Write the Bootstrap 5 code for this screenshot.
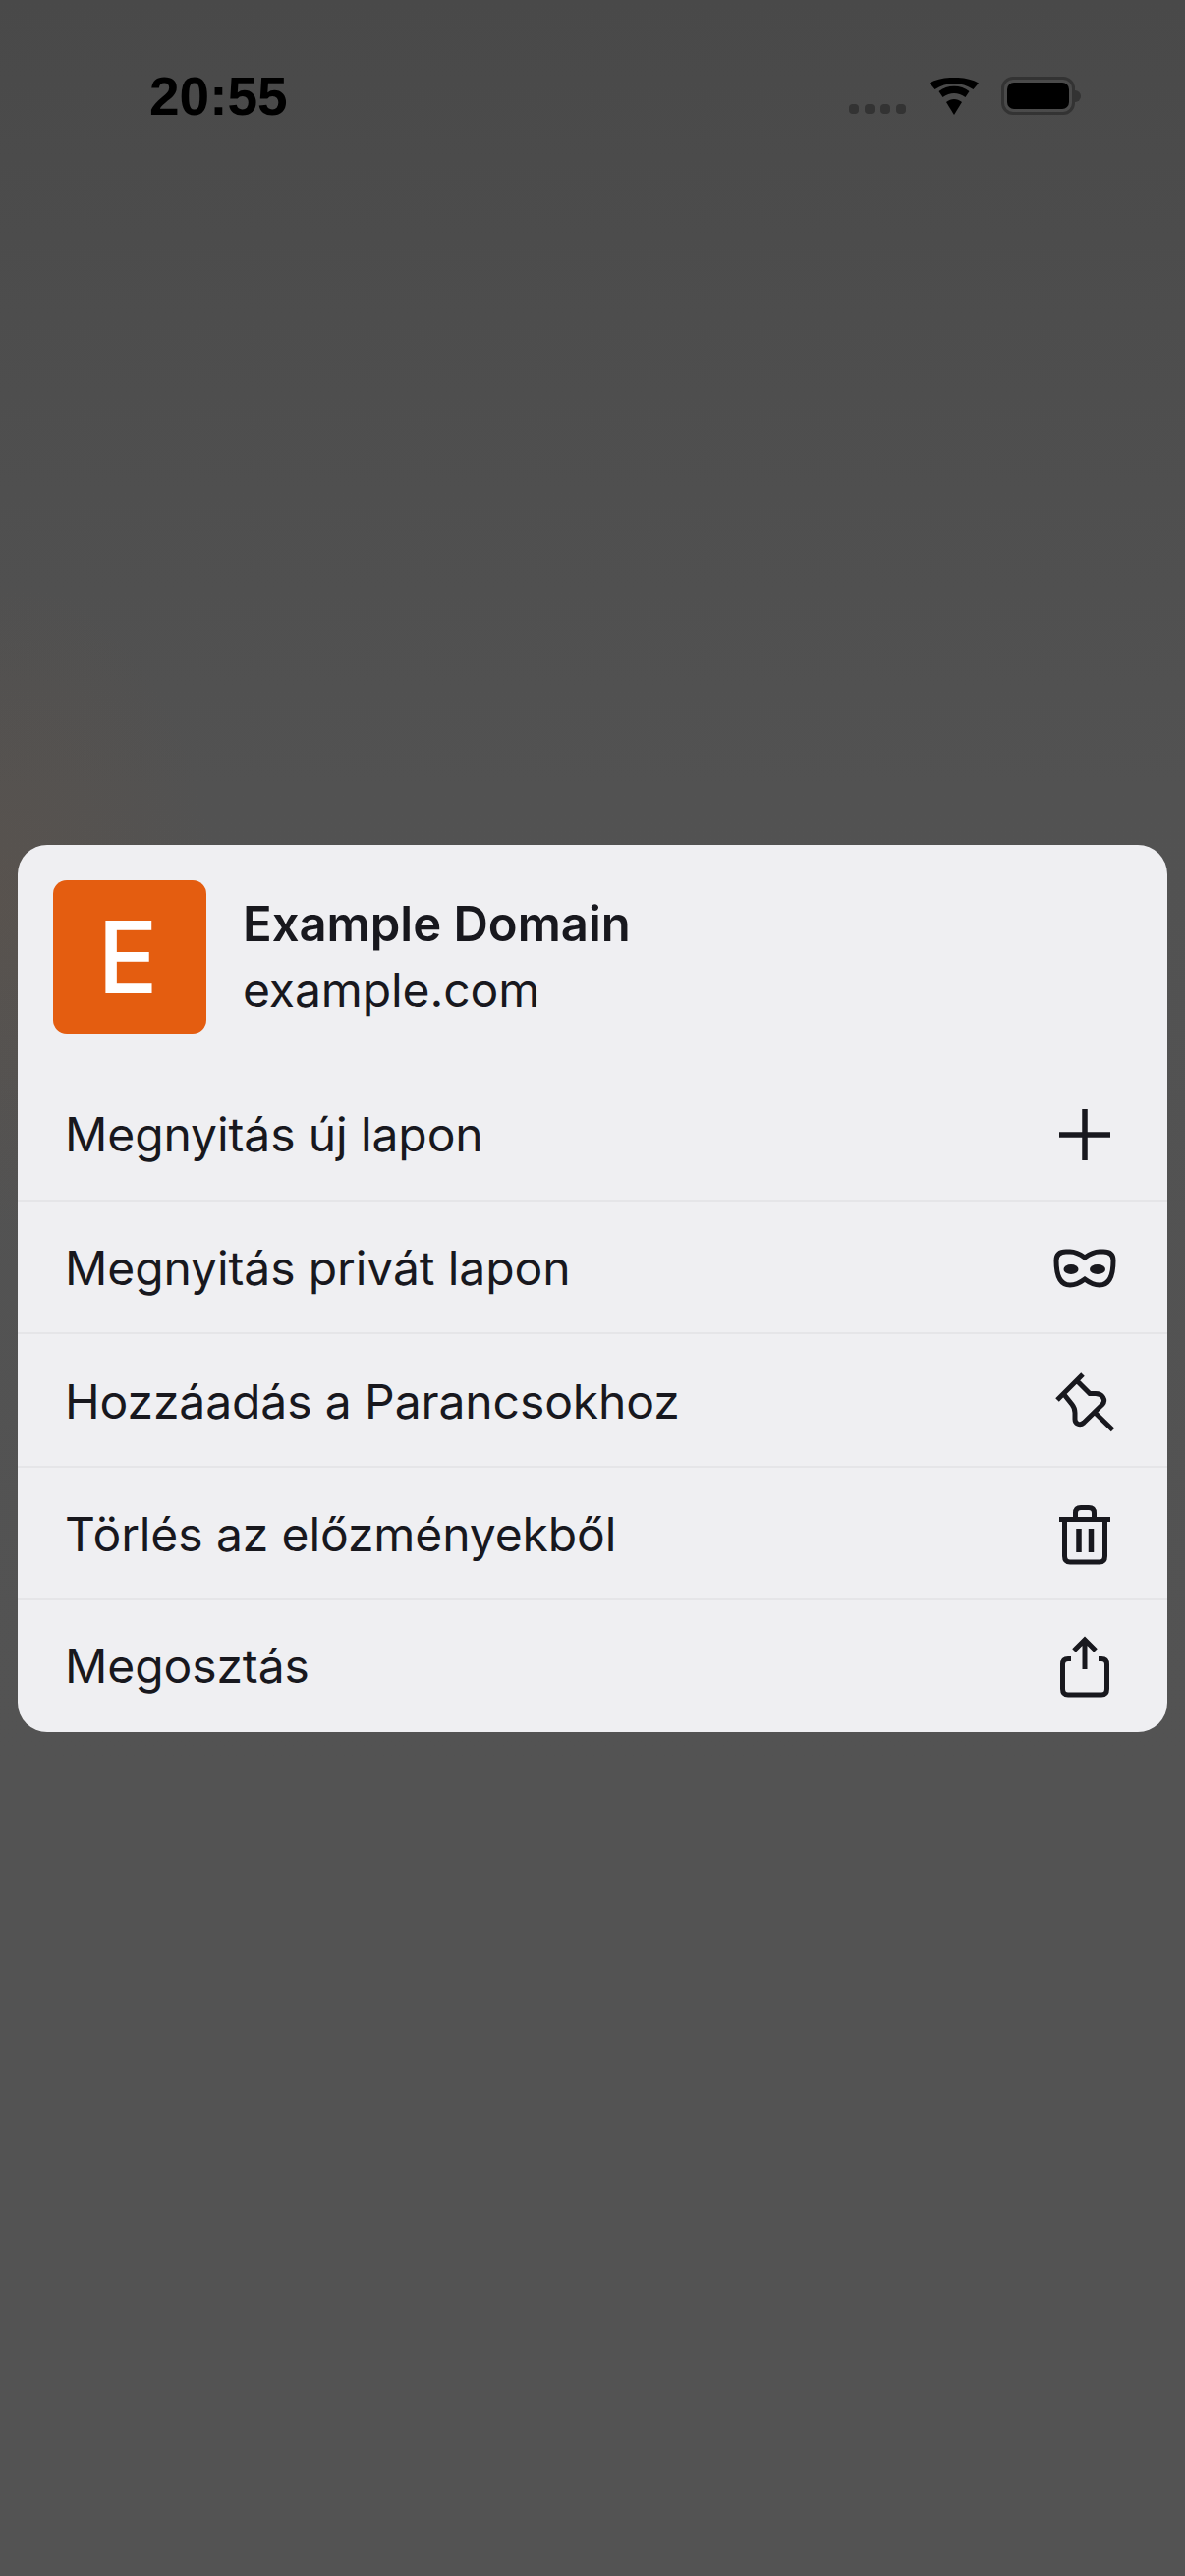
<!DOCTYPE html>
<html lang="hu">
<head>
  <meta charset="UTF-8">
  <title>Example Domain</title>
  <link href="https://cdn.jsdelivr.net/npm/bootstrap@5.3.3/dist/css/bootstrap.min.css" rel="stylesheet">
  <style>
    body {
      min-height: 2622px;
      font-family: Inter, "Noto Sans", sans-serif;
      color: #18181e;
      background:
        radial-gradient(ellipse 220px 330px at 0 920px, rgba(110, 85, 65, .22), rgba(110, 85, 65, 0)),
        linear-gradient(#494949 0, #4e4e4e 400px, #525252 800px, #535353 1800px, #535353 2622px);
    }
    .status-bar { height: 860px; padding: 75px 106px 0 152px; }
    .clock { font: 700 55px/46px "Liberation Sans", sans-serif; color: #000; }
    .signal-dot { width: 10px; height: 10px; border-radius: 4px; background: #333; }
    .signal-dots { margin-top: 31px; margin-right: 24px; gap: 6px; }
    .wifi-icon { margin-top: 4px; margin-right: 23px; }
    .battery-shell { width: 75px; height: 39px; margin-top: 3px; padding: 3px; border: 3px solid #333; border-radius: 12px; }
    .battery-fill { height: 100%; border-radius: 7px; background: #000; }
    .battery-nub { width: 6px; height: 12px; margin-top: 17px; border-radius: 0 6px 6px 0; background: #333; }
    .sheet { margin: 0 18px; border-radius: 30px; background: #efeff2; overflow: hidden; }
    .sheet-head { height: 225px; padding: 36px 0 0 36px; gap: 37px; }
    .site-logo { width: 156px; height: 156px; border-radius: 14px; background: #e45d10; color: #fff; font-size: 102px; font-weight: 500; line-height: 1; padding-right: 4px; }
    .site-title { font-size: 49px; line-height: 68px; font-weight: 600; margin-top: 11px; }
    .site-url { font-size: 48px; line-height: 66px; letter-spacing: -.1px; }
    .menu-row { height: 135.5px; padding: 4px 52px 0 48px; font-size: 48px; letter-spacing: -.1px; border-top: 2px solid #e5e5e8; }
    .menu-row:first-child { border-top: 0; }
    .menu-row:last-child { padding-top: 0; }
    .menu-icon { width: 64px; height: 64px; fill: none; stroke: #18181e; stroke-width: 5; }
  </style>
</head>
<body>
  <!-- status bar -->
  <div class="status-bar d-flex align-items-start">
    <div class="clock flex-grow-1">20:55</div>
    <div class="signal-dots d-flex">
      <div class="signal-dot"></div><div class="signal-dot"></div><div class="signal-dot"></div><div class="signal-dot"></div>
    </div>
    <svg class="wifi-icon" width="50" height="38" viewBox="0 0 50 38">
      <path d="M25 38 17 25C22 21 28 21 33 25Z"/>
      <path d="M13.5 20 9.5 14C18 7 32 7 40.5 14L36.5 20C29 14.5 21 14.5 13.5 20Z"/>
      <path d="M5.5 12 0 5.5C13 -2 37 -2 50 5.5L44.5 12C33 4 17 4 5.5 12Z"/>
    </svg>
    <div class="battery-shell"><div class="battery-fill"></div></div>
    <div class="battery-nub"></div>
  </div>

  <!-- link preview sheet -->
  <div class="sheet">
    <div class="sheet-head d-flex align-items-start">
      <div class="site-logo d-flex align-items-center justify-content-center">E</div>
      <div>
        <div class="site-title">Example Domain</div>
        <div class="site-url">example.com</div>
      </div>
    </div>
    <div>
      <div class="menu-row d-flex align-items-center justify-content-between">
        <span>Megnyitás új lapon</span>
        <svg class="menu-icon" viewBox="0 0 64 64"><path stroke-width="5.5" d="M6 32H58M32 6V58"/></svg>
      </div>
      <div class="menu-row d-flex align-items-center justify-content-between">
        <span>Megnyitás privát lapon</span>
        <svg class="menu-icon" viewBox="0 0 64 64">
          <path d="M32 21C28 18 24 15 17 15H13C6 15 3 18 3 24C3 38 6 49 17 49C24 49 28 46 32 43C36 46 40 49 47 49C58 49 61 38 61 24C61 18 58 15 51 15H47C40 15 36 18 32 21Z"/>
          <ellipse cx="18" cy="33" rx="7.5" ry="5" fill="#18181e" stroke="none"/>
          <ellipse cx="45" cy="33" rx="8" ry="5" fill="#18181e" stroke="none"/>
        </svg>
      </div>
      <div class="menu-row d-flex align-items-center justify-content-between">
        <span>Hozzáadás a Parancsokhoz</span>
        <svg class="menu-icon" viewBox="0 0 64 64">
          <path d="M4 30 30 4M24.5 11 37 23.5H43C50 23.5 54 30 50 34.5L31 53C27 56.5 22 54 22 49.5V43C22 39 21 37 19 34.5L11 24.5M43 43.5 60.5 60.5"/>
        </svg>
      </div>
      <div class="menu-row d-flex align-items-center justify-content-between">
        <span>Törlés az előzményekből</span>
        <svg class="menu-icon" viewBox="0 0 64 64">
          <path d="M6 16.5H58M22.5 15V10C22.5 6 24.5 4.5 28 4.5H36C39.5 4.5 41.5 6 41.5 10V15M11.5 17V54C11.5 58 13.5 60 17 60H47C50.5 60 52.5 58 52.5 54V17"/>
          <path stroke-width="5.5" d="M26 26V50M38.5 26V50"/>
        </svg>
      </div>
      <div class="menu-row d-flex align-items-center justify-content-between">
        <span>Megosztás</span>
        <svg class="menu-icon" viewBox="0 0 64 64">
          <path d="M18 24.5H15C11.5 24.5 9.5 26.5 9.5 30V55C9.5 59 11.5 61 15 61H49C52.5 61 54.5 59 54.5 55V30C54.5 26.5 52.5 24.5 49 24.5H46M32 35V5M21 16 32 5 43 16"/>
        </svg>
      </div>
    </div>
  </div>

  <script src="https://cdn.jsdelivr.net/npm/bootstrap@5.3.3/dist/js/bootstrap.bundle.min.js"></script>
</body>
</html>
